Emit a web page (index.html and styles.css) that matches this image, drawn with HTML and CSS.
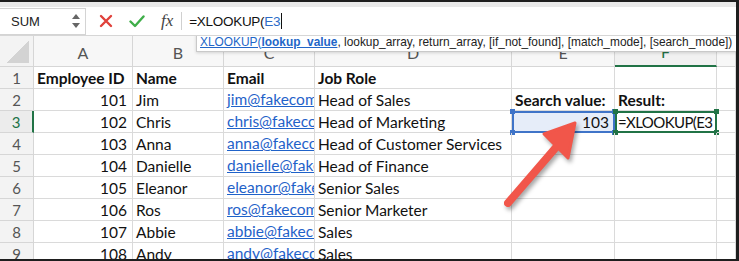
FILE: index.html
```html
<!DOCTYPE html>
<html lang="en">
<head>
    <meta charset="UTF-8">
    <title>XLOOKUP</title>
    <link rel="stylesheet" href="styles.css">
</head>
<body>
<div class="window">
    <div class="top-strip"></div>

    <div class="formula-bar">
        <div class="name-box">
            <span>SUM</span>
            <svg class="spinner" width="8" height="16" viewBox="0 0 8 16">
                <path d="M0 6 L4 1 L8 6 Z" fill="#666"/>
                <path d="M0 10 L4 15 L8 10 Z" fill="#666"/>
            </svg>
        </div>
        <div class="fb-icons">
            <svg width="14" height="14" viewBox="0 0 14 14">
                <path d="M2 2 L12 12 M12 2 L2 12" stroke="#e0413b" stroke-width="2.4" stroke-linecap="round"/>
            </svg>
            <svg width="16" height="14" viewBox="0 0 16 14">
                <path d="M1.5 7.5 L6 12 L14.5 2.5" fill="none" stroke="#3fae49" stroke-width="2.4" stroke-linecap="round" stroke-linejoin="round"/>
            </svg>
            <span class="fx">fx</span>
        </div>
        <div class="formula">=XLOOKUP(<span class="ref">E3</span><span class="caret"></span></div>
    </div>

    <div class="sheet">
        <div class="grid">
            <div class="corner"></div>
            <div class="col-head">A</div>
            <div class="col-head">B</div>
            <div class="col-head">C</div>
            <div class="col-head">D</div>
            <div class="col-head">E</div>
            <div class="col-head active">F</div>
            <div class="col-head"></div>

            <div class="row-head">1</div>
            <div class="cell bold">Employee ID</div>
            <div class="cell bold">Name</div>
            <div class="cell bold">Email</div>
            <div class="cell bold">Job Role</div>
            <div class="cell"></div>
            <div class="cell"></div>
            <div class="cell"></div>

            <div class="row-head">2</div>
            <div class="cell num">101</div>
            <div class="cell">Jim</div>
            <div class="cell link"><span>jim@fakecompany.com</span></div>
            <div class="cell">Head of Sales</div>
            <div class="cell bold">Search value:</div>
            <div class="cell bold">Result:</div>
            <div class="cell"></div>

            <div class="row-head active">3</div>
            <div class="cell num">102</div>
            <div class="cell">Chris</div>
            <div class="cell link"><span>chris@fakecompany.com</span></div>
            <div class="cell">Head of Marketing</div>
            <div class="cell num picked"><span class="handles"></span>103</div>
            <div class="cell editing"><span class="handles"></span>=XLOOKUP(E3</div>
            <div class="cell"></div>

            <div class="row-head">4</div>
            <div class="cell num">103</div>
            <div class="cell">Anna</div>
            <div class="cell link"><span>anna@fakecompany.com</span></div>
            <div class="cell">Head of Customer Services</div>
            <div class="cell"></div>
            <div class="cell"></div>
            <div class="cell"></div>

            <div class="row-head">5</div>
            <div class="cell num">104</div>
            <div class="cell">Danielle</div>
            <div class="cell link"><span>danielle@fakecompany.com</span></div>
            <div class="cell">Head of Finance</div>
            <div class="cell"></div>
            <div class="cell"></div>
            <div class="cell"></div>

            <div class="row-head">6</div>
            <div class="cell num">105</div>
            <div class="cell">Eleanor</div>
            <div class="cell link"><span>eleanor@fakecompany.com</span></div>
            <div class="cell">Senior Sales</div>
            <div class="cell"></div>
            <div class="cell"></div>
            <div class="cell"></div>

            <div class="row-head">7</div>
            <div class="cell num">106</div>
            <div class="cell">Ros</div>
            <div class="cell link"><span>ros@fakecompany.com</span></div>
            <div class="cell">Senior Marketer</div>
            <div class="cell"></div>
            <div class="cell"></div>
            <div class="cell"></div>

            <div class="row-head">8</div>
            <div class="cell num">107</div>
            <div class="cell">Abbie</div>
            <div class="cell link"><span>abbie@fakecompany.com</span></div>
            <div class="cell">Sales</div>
            <div class="cell"></div>
            <div class="cell"></div>
            <div class="cell"></div>

            <div class="row-head">9</div>
            <div class="cell num">108</div>
            <div class="cell">Andy</div>
            <div class="cell link"><span>andy@fakecompany.com</span></div>
            <div class="cell">Sales</div>
            <div class="cell"></div>
            <div class="cell"></div>
            <div class="cell"></div>
        </div>

        <!-- function hint shown while typing -->
        <div class="hint"><span class="fn">XLOOKUP(</span><span class="fn arg">lookup_value</span>, lookup_array, return_array, [if_not_found], [match_mode], [search_mode])</div>

        <svg class="arrow" width="120" height="110" viewBox="0 0 120 110">
            <line x1="14" y1="100" x2="64" y2="42" stroke="#f1564a" stroke-width="8" stroke-linecap="round"/>
            <path d="M81 20 L50 31 L74 55 Z" fill="#f1564a" stroke="#f1564a" stroke-width="3" stroke-linejoin="round"/>
        </svg>
    </div>
</div>
</body>
</html>
```

FILE: styles.css
```css
* {
    margin: 0;
    padding: 0;
    box-sizing: border-box;
}

body {
    width: 739px;
    height: 261px;
    overflow: hidden;
    background-color: #fff;
}

.window {
    height: 261px;
    display: flex;
    flex-direction: column;
    border-top: 2px solid #1e1e1e;
    border-right: 3px solid #1e1e1e;
    border-bottom: 2px solid #1e1e1e;
    overflow: hidden;
}

.top-strip {
    height: 5px;
    background-color: #e9e9e9;
}

/* formula bar */
.formula-bar {
    height: 29px;
    display: flex;
    align-items: center;
    background-color: #fff;
    border-bottom: 1px solid #d6d6d6;
    font-family: "Liberation Sans", Arial, sans-serif;
}

.name-box {
    width: 86px;
    height: 27px;
    display: flex;
    align-items: center;
    justify-content: space-between;
    padding: 0 5px 0 11px;
    border: 1px solid #d4d4d4;
    border-left: none;
    font-size: 13px;
    color: #222;
}

.fb-icons {
    display: flex;
    align-items: center;
    gap: 16px;
    padding: 0 8px 0 13px;
    height: 18px;
    border-right: 1px solid #d0d0d0;
    margin-right: 7px;
}

.fx {
    font-family: "Liberation Serif", "Times New Roman", serif;
    font-style: italic;
    font-size: 17px;
    color: #444;
}

.formula {
    display: flex;
    align-items: center;
    font-size: 13.5px;
    color: #111;
    letter-spacing: -0.3px;
}

.formula .ref {
    color: #2e6cc7;
}

.caret {
    width: 1px;
    height: 16px;
    background-color: #111;
    margin-left: 1px;
}

/* spreadsheet */
.sheet {
    position: relative;
    flex: 1;
    overflow: hidden;
    font-family: Lato, "Open Sans", sans-serif;
}

.grid {
    display: grid;
    grid-template-columns: 34px 99px 91px 91px 197px 103px 102px 19px;
    grid-template-rows: 31px repeat(9, 22px);
}

.corner {
    background-color: #f3f3f3;
    border-right: 1px solid #d6d6d6;
    border-bottom: 1px solid #d6d6d6;
    background-image: linear-gradient(135deg, transparent 55%, #d3d3d3 55%);
    background-size: 26px 24px;
    background-position: 3px 3px;
    background-repeat: no-repeat;
}

.col-head {
    display: flex;
    align-items: center;
    justify-content: center;
    background-color: #f7f7f7;
    border-right: 1px solid #d6d6d6;
    border-bottom: 1px solid #d6d6d6;
    font-size: 16px;
    color: #555;
    padding-top: 2px;
}

.col-head.active {
    color: #217346;
    border-bottom: 2px solid #217346;
    background-color: #f1f1f1;
}

.row-head {
    display: flex;
    align-items: center;
    justify-content: center;
    background-color: #f3f3f3;
    border-right: 1px solid #d6d6d6;
    border-bottom: 1px solid #d6d6d6;
    font-size: 15px;
    color: #555;
}

.row-head.active {
    color: #217346;
    border-right: 2px solid #217346;
    background-color: #ececec;
}

.cell {
    position: relative;
    display: flex;
    align-items: center;
    padding: 0 3px;
    border-right: 1px solid #dadada;
    border-bottom: 1px solid #dadada;
    font-size: 15.5px;
    color: #111;
    white-space: nowrap;
    overflow: hidden;
}

.cell.bold {
    font-weight: 700;
}

.cell.num {
    justify-content: flex-end;
    padding-right: 5px;
}

.cell.link {
    display: block;
    line-height: 21px;
    color: #1f62c9;
    text-decoration: underline;
    padding-right: 0;
}

.cell.picked {
    overflow: visible;
    background-color: #e6edf9;
    border: 2px solid #3f74c8;
    padding-right: 4px;
}

.cell.editing {
    overflow: visible;
    border: 2px solid #217346;
    padding-left: 1px;
    font-size: 15px;
    letter-spacing: -0.6px;
}

/* corner handles of the two highlighted cells */
.handles,
.handles::before {
    position: absolute;
    width: 5px;
    height: 5px;
}

.handles {
    top: -4px;
    left: -4px;
}

.picked .handles { background-color: #3f74c8; }
.editing .handles { background-color: #217346; }

.handles::before {
    content: "";
    left: 0;
    top: 21px;
    background-color: inherit;
}

.picked::after,
.editing::after,
.picked::before,
.editing::before {
    content: "";
    position: absolute;
    right: -4px;
    width: 5px;
    height: 5px;
}

.picked::before,
.editing::before { top: -4px; }

.picked::after,
.editing::after { bottom: -4px; }

.picked::before, .picked::after { background-color: #3f74c8; }
.editing::before, .editing::after { background-color: #217346; }

/* function hint */
.hint {
    position: absolute;
    top: -3px;
    left: 196px;
    right: 0;
    height: 19px;
    padding-left: 3px;
    line-height: 17px;
    background-color: #fff;
    border: 1px solid #c9c9c9;
    border-right: none;
    box-shadow: 0 1px 3px rgba(0, 0, 0, 0.15);
    font-family: "Liberation Sans", Arial, sans-serif;
    font-size: 11.9px;
    color: #222;
    white-space: nowrap;
    overflow: hidden;
}

.hint .fn {
    color: #2266c8;
    text-decoration: underline;
}

.hint .arg {
    font-weight: 700;
}

.arrow {
    position: absolute;
    left: 494px;
    top: 67px;
    filter: drop-shadow(2px 3px 2px rgba(0, 0, 0, 0.35));
}
```
